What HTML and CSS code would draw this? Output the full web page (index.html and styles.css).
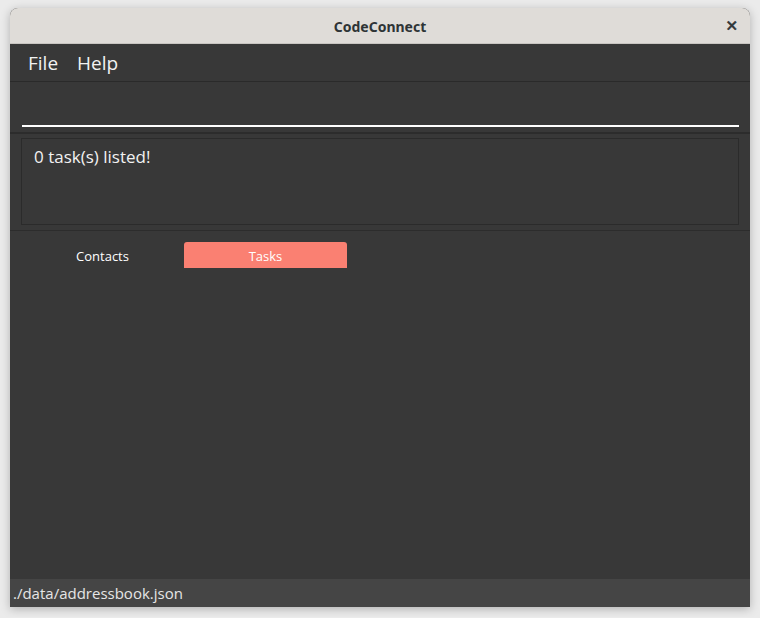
FILE: index.html
```html
<!DOCTYPE html>
<html>
<head>
<meta charset="utf-8">
<link rel="stylesheet" href="styles.css">
</head>
<body>
<div class="window">
  <div class="titlebar">
    <span class="title">CodeConnect</span>
    <span class="close">✕</span>
  </div>
  <div class="menubar">
    <span class="menu">File</span>
    <span class="menu">Help</span>
  </div>
  <div class="command">
    <div class="command-line"></div>
  </div>
  <div class="result-wrap">
    <div class="result">0 task(s) listed!</div>
  </div>
  <div class="tabs-area">
    <div class="tabs">
      <div class="tab">Contacts</div>
      <div class="tab active">Tasks</div>
    </div>
  </div>
  <div class="status">./data/addressbook.json</div>
</div>
</body>
</html>
```
FILE: styles.css
```css
html, body {
  margin: 0;
  padding: 0;
}
body {
  background: #ebebeb;
  padding: 8px 10px 10px 10px;
  font-family: "Open Sans", "Noto Sans", sans-serif;
}
.window {
  width: 740px;
  height: 599px;
  display: flex;
  flex-direction: column;
  background: #383838;
  border-radius: 8px 8px 0 0;
  box-shadow: 0 2px 10px rgba(0,0,0,0.25);
  overflow: hidden;
}
.titlebar {
  height: 36px;
  flex: none;
  background: #dfdcd8;
  display: flex;
  align-items: center;
  justify-content: center;
  position: relative;
  border-bottom: 1px solid #c8c5c1;
  box-sizing: border-box;
}
.title {
  font-family: "Noto Sans", sans-serif;
  font-weight: 700;
  font-size: 14px;
  color: #2e3436;
  margin-top: 2px;
}
.close {
  position: absolute;
  right: 12px;
  top: 9px;
  font-size: 15px;
  font-weight: 700;
  color: #2e3436;
  font-family: "DejaVu Sans", sans-serif;
  -webkit-text-stroke: 0.6px #2e3436;
}
.menubar {
  height: 37px;
  flex: none;
  display: flex;
  align-items: center;
  padding-left: 18px;
  gap: 19px;
  background: #383838;
  border-bottom: 1px solid #2a2a2a;
}
.menu {
  font-size: 19px;
  color: #f2f2f2;
}
.command {
  height: 52px;
  flex: none;
  padding: 0 11px 5px 12px;
  display: flex;
  align-items: flex-end;
  box-sizing: border-box;
  border-bottom: 2px solid #2c2c2c;
}
.command-line {
  flex: 1;
  height: 2px;
  background: #ffffff;
}
.result-wrap {
  flex: none;
  padding: 4px 11px 5px 11px;
  border-bottom: 1px solid #2c2c2c;
}
.result {
  height: 87px;
  box-sizing: border-box;
  border: 1px solid #2b2b2b;
  padding: 6px 12px;
  font-size: 17px;
  color: #f2f2f2;
}
.tabs-area {
  flex: 1;
  padding: 11px 11px 0 11px;
}
.tabs {
  display: flex;
}
.tab {
  width: 163px;
  height: 26px;
  display: flex;
  align-items: center;
  justify-content: center;
  font-size: 13px;
  color: #ffffff;
  border-radius: 3px 3px 0 0;
  padding-top: 2px;
  box-sizing: border-box;
}
.tab.active {
  background: #fa8072;
}
.status {
  height: 28px;
  flex: none;
  background: #454545;
  color: #e6e6e6;
  font-size: 15px;
  display: flex;
  align-items: center;
  padding-left: 3px;
}
```
